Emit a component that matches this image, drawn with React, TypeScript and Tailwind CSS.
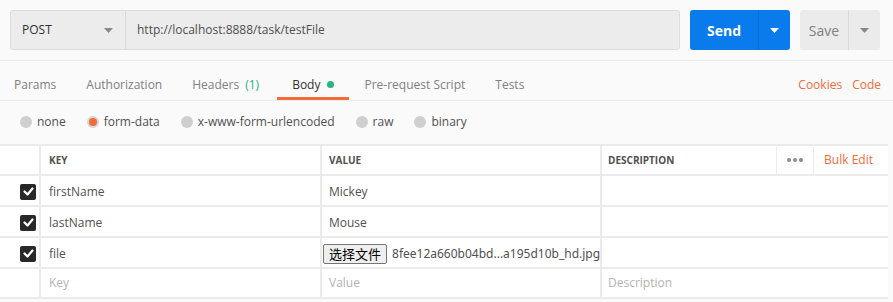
const font = "font-['Open_Sans','Noto_Sans',sans-serif]";

const Caret = ({ className }: { className: string }) => (
  <svg width="9" height="5" viewBox="0 0 9 5" className={className}>
    <path d="M0 0h9L4.5 5z" fill="currentColor" />
  </svg>
);

const Radio = ({ label, checked }: { label: string; checked?: boolean }) => (
  <div className="flex items-center gap-[5px]">
    {checked ? (
      <span className="flex h-[12px] w-[12px] items-center justify-center rounded-full bg-[#d6d6d6]">
        <span className="h-[8px] w-[8px] rounded-full bg-[#f26b3a]" />
      </span>
    ) : (
      <span className="h-[12px] w-[12px] rounded-full bg-[#cfcfcf]" />
    )}
    <span className="text-[12px] text-[#505050]">{label}</span>
  </div>
);

const Check = () => (
  <span className="flex h-[16px] w-[16px] items-center justify-center rounded-[2px] bg-[#282828]">
    <svg width="11" height="9" viewBox="0 0 11 9">
      <path d="M1.5 4.5l3 3 5-6" stroke="#fff" strokeWidth="2.2" fill="none" strokeLinecap="round" strokeLinejoin="round" />
    </svg>
  </span>
);

const rows = [
  { key: "firstName", value: "Mickey" },
  { key: "lastName", value: "Mouse" },
  { key: "file", value: null },
];

export default function App() {
  return (
    <div className={`${font} h-[302px] w-[893px] overflow-hidden bg-[#fafafa]`}>
      {/* request bar */}
      <div className="flex h-[61px] items-start gap-[10px] border-b border-[#ececec] pl-[10px] pr-[13px] pt-[10px]">
        <div className="flex h-[40px] flex-1 rounded-[3px] border border-[#dcdcdc] bg-[#ececec]">
          <div className="flex w-[115px] items-center justify-between border-r border-[#d9d9d9] pl-[11px] pr-[12px]">
            <span className="text-[12px] text-[#303030]">POST</span>
            <Caret className="text-[#888]" />
          </div>
          <div className="flex items-center pl-[11px] text-[12px] text-[#505050]">
            http://localhost:8888/task/testFile
          </div>
        </div>
        <div className="flex h-[40px] w-[100px] rounded-[3px] bg-[#097bed]">
          <div className="flex w-[69px] items-center justify-center border-r border-[#0a6fd4] text-[14px] font-bold text-white">
            Send
          </div>
          <div className="flex flex-1 items-center justify-center">
            <Caret className="text-white" />
          </div>
        </div>
        <div className="flex h-[40px] w-[80px] rounded-[3px] bg-[#ebebeb]">
          <div className="flex w-[49px] items-center justify-center border-r border-[#dcdcdc] text-[14px] text-[#808080]">
            Save
          </div>
          <div className="flex flex-1 items-center justify-center">
            <Caret className="text-[#888]" />
          </div>
        </div>
      </div>

      {/* tabs */}
      <div className="flex h-[40px] items-stretch justify-between border-b border-[#ececec] pr-[12px]">
        <div className="flex text-[12px] text-[#808080]">
          <div className="flex items-center pl-[14px] pr-[15px] pt-[8px]">Params</div>
          <div className="flex items-center px-[15px] pt-[8px]">Authorization</div>
          <div className="flex items-center pl-[15px] pr-[18px] pt-[8px]">
            Headers<span className="ml-[6px] text-[#26b47f]">(1)</span>
          </div>
          <div className="flex items-center border-b-[3px] border-[#f26b3a] px-[15px] pt-[11px] text-[#303030]">
            Body<span className="ml-[7px] h-[7px] w-[7px] rounded-full bg-[#26b47f]" />
          </div>
          <div className="flex items-center px-[15px] pt-[8px]">Pre-request Script</div>
          <div className="flex items-center px-[15px] pt-[8px]">Tests</div>
        </div>
        <div className="flex items-center gap-[10px] pt-[8px] text-[12px] text-[#f26b3a]">
          <span>Cookies</span>
          <span>Code</span>
        </div>
      </div>

      {/* body type */}
      <div className="flex h-[43px] items-center gap-[21px] pb-[2px] pl-[20px]">
        <Radio label="none" />
        <Radio label="form-data" checked />
        <Radio label="x-www-form-urlencoded" />
        <Radio label="raw" />
        <Radio label="binary" />
      </div>

      {/* table */}
      <div className="grid w-[888px] grid-cols-[39px_279px_278px_286px] gap-[2px] border-y-2 border-[#ebebeb] bg-[#ebebeb] text-[12px]">
        <div className="h-[28px] bg-white" />
        <div className="flex items-center bg-white pl-[8px] text-[10px] font-bold text-[#505050]">KEY</div>
        <div className="flex items-center bg-white pl-[7px] text-[10px] font-bold text-[#505050]">VALUE</div>
        <div className="flex items-center justify-between bg-white pl-[6px] text-[10px] font-bold text-[#505050]">
          DESCRIPTION
          <div className="flex h-full items-center">
            <div className="flex h-[27px] items-center border-x border-[#ececec] px-[10px]">
              <span className="flex gap-[2px]">
                <span className="h-[4px] w-[4px] rounded-full bg-[#8a8a8a]" />
                <span className="h-[4px] w-[4px] rounded-full bg-[#8a8a8a]" />
                <span className="h-[4px] w-[4px] rounded-full bg-[#8a8a8a]" />
              </span>
            </div>
            <span className="pl-[10px] pr-[15px] text-[12px] font-normal text-[#f26b3a]">Bulk Edit</span>
          </div>
        </div>

        {rows.map((r) => (
          <div key={r.key} className="contents">
            <div className="flex h-[29px] items-center justify-end bg-white pr-[3px] pt-[2px]">
              <Check />
            </div>
            <div className="flex items-center bg-white pl-[8px] pt-[2px] text-[#505050]">{r.key}</div>
            <div className="flex items-center bg-white pl-[7px] pt-[2px] text-[#505050]">
              {r.value ?? (
                <div className="-ml-[6px] mt-[1px] flex items-center gap-[5px] whitespace-nowrap font-['Noto_Sans','Noto_Sans_CJK_SC',sans-serif]">
                  <span className="flex h-[20px] items-center rounded-[2px] border border-[#767676] bg-[#efefef] px-[5px] text-[13px] leading-none text-black">
                    选择文件
                  </span>
                  <span className="text-[12px] text-[#505050]">8fee12a660b04bd...a195d10b_hd.jpg</span>
                </div>
              )}
            </div>
            <div className="bg-white" />
          </div>
        ))}

        <div className="h-[28px] bg-white" />
        <div className="flex items-center bg-white pl-[8px] text-[#b3b3b3]">Key</div>
        <div className="flex items-center bg-white pl-[7px] text-[#b3b3b3]">Value</div>
        <div className="flex items-center bg-white pl-[6px] text-[#b3b3b3]">Description</div>
      </div>
    </div>
  );
}
